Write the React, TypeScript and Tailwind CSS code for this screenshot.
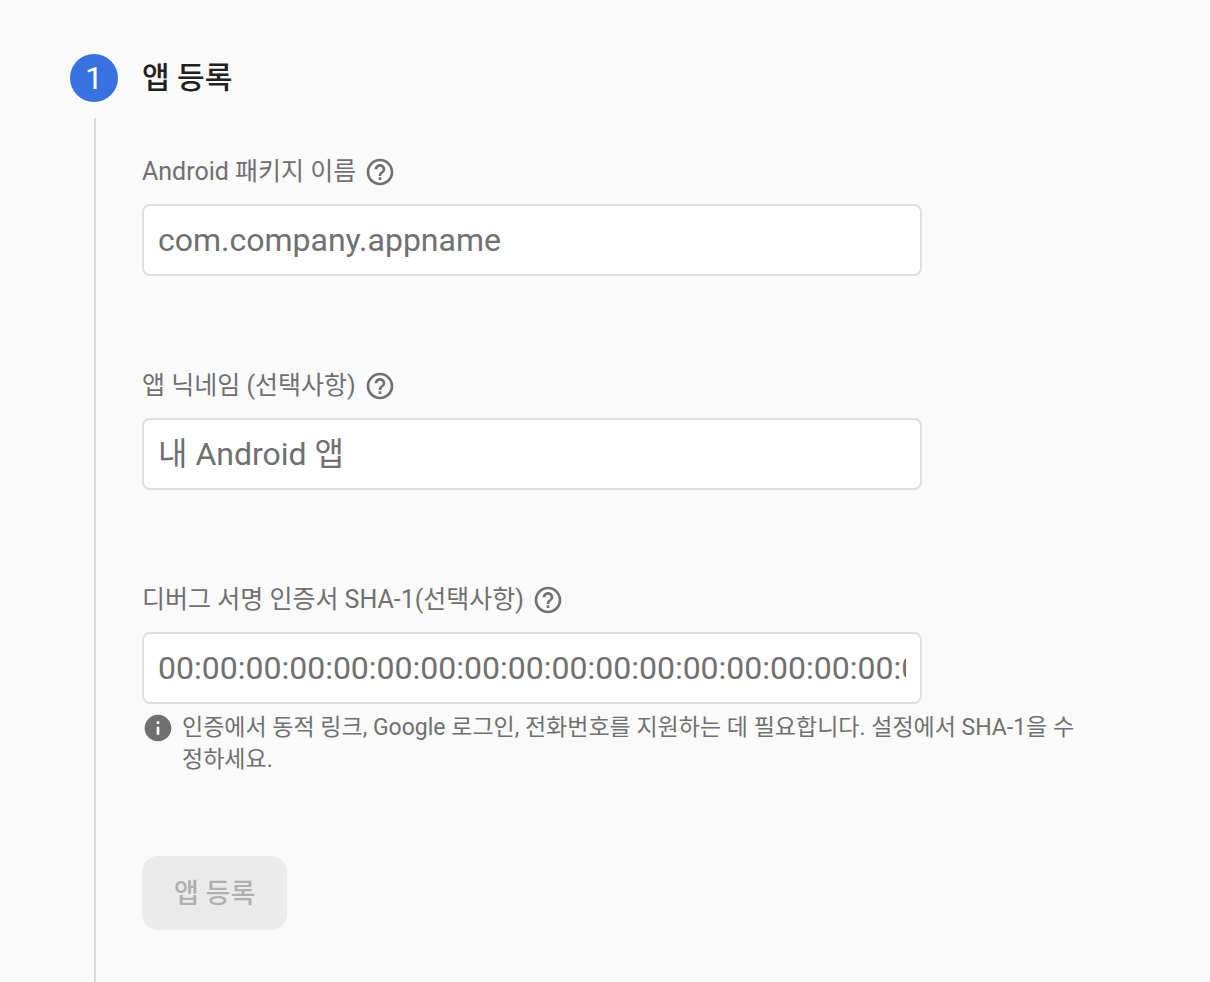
import { useId } from "react";

type FieldProps = { label: string; placeholder: string; hint?: string };

function HelpIcon() {
  return (
    <svg viewBox="0 0 24 24" className="size-8" fill="currentColor" aria-hidden="true">
      <path d="M11 18h2v-2h-2v2zm1-16C6.48 2 2 6.48 2 12s4.48 10 10 10 10-4.480 10-10S17.520 2 12 2zm0 18c-4.410 0-8-3.590-8-8s3.590-8 8-8 8 3.590 8 8-3.590 8-8 8zm0-14c-2.210 0-4 1.790-4 4h2c0-1.100.9-2 2-2s2 .9 2 2c0 2-3 1.750-3 5h2c0-2.250 3-2.500 3-5 0-2.210-1.790-4-4-4z" />
    </svg>
  );
}

function InfoIcon() {
  return (
    <svg viewBox="0 0 24 24" className="size-8 shrink-0" fill="currentColor" aria-hidden="true">
      <path d="M12 2C6.480 2 2 6.480 2 12s4.480 10 10 10 10-4.480 10-10S17.520 2 12 2zm1 15h-2v-6h2v6zm0-8h-2V7h2v2z" />
    </svg>
  );
}

function Field({ label, placeholder, hint }: FieldProps) {
  const id = useId();
  return (
    <div>
      <div className="flex h-8 items-center gap-2">
        <label htmlFor={id} className="text-[25px] leading-8">{label}</label>
        <button type="button" aria-label="도움말" className="shrink-0">
          <HelpIcon />
        </button>
      </div>
      <input
        id={id}
        type="text"
        placeholder={placeholder}
        className="mt-4 block h-18 w-full max-w-[780px] rounded-lg border-2 border-[#e0e0e0] bg-white px-3.5 text-[32px] text-[#212121] placeholder:text-[#707070]"
      />
      {hint && (
        <p className="mt-2 flex gap-2 text-[23px] leading-8">
          <InfoIcon />
          <span>{hint}</span>
        </p>
      )}
    </div>
  );
}

export default function App() {
  return (
    <main className="flex min-h-screen flex-col bg-[#fafafa] pr-[134px] pl-[70px] pt-[54px] font-[Roboto,'Noto_Sans_CJK_KR',sans-serif] text-[#707070]">
      <header className="flex h-12 items-center gap-6">
        <span className="flex size-12 items-center justify-center rounded-full bg-[#3871e0] text-[32px] text-white">1</span>
        <h1 className="text-[30px] leading-11 font-medium text-[#212121]">앱 등록</h1>
      </header>
      <form className="mt-4 ml-6 flex grow flex-col gap-20 border-l-2 border-[#dcdcdc] pt-[38px] pb-[52px] pl-[46px]">
        <div className="flex flex-col gap-[94px]">
          <Field label="Android 패키지 이름" placeholder="com.company.appname" />
          <Field label="앱 닉네임 (선택사항)" placeholder="내 Android 앱" />
          <Field
            label="디버그 서명 인증서 SHA-1(선택사항)"
            placeholder="00:00:00:00:00:00:00:00:00:00:00:00:00:00:00:00:00:00:00:00"
            hint="인증에서 동적 링크, Google 로그인, 전화번호를 지원하는 데 필요합니다. 설정에서 SHA-1을 수정하세요."
          />
        </div>
        <button type="submit" disabled className="self-start rounded-2xl bg-[#ebebeb] px-8 pt-[18px] pb-4 text-[27px] leading-10 font-medium text-[#b0b0b0]">
          앱 등록
        </button>
      </form>
    </main>
  );
}
